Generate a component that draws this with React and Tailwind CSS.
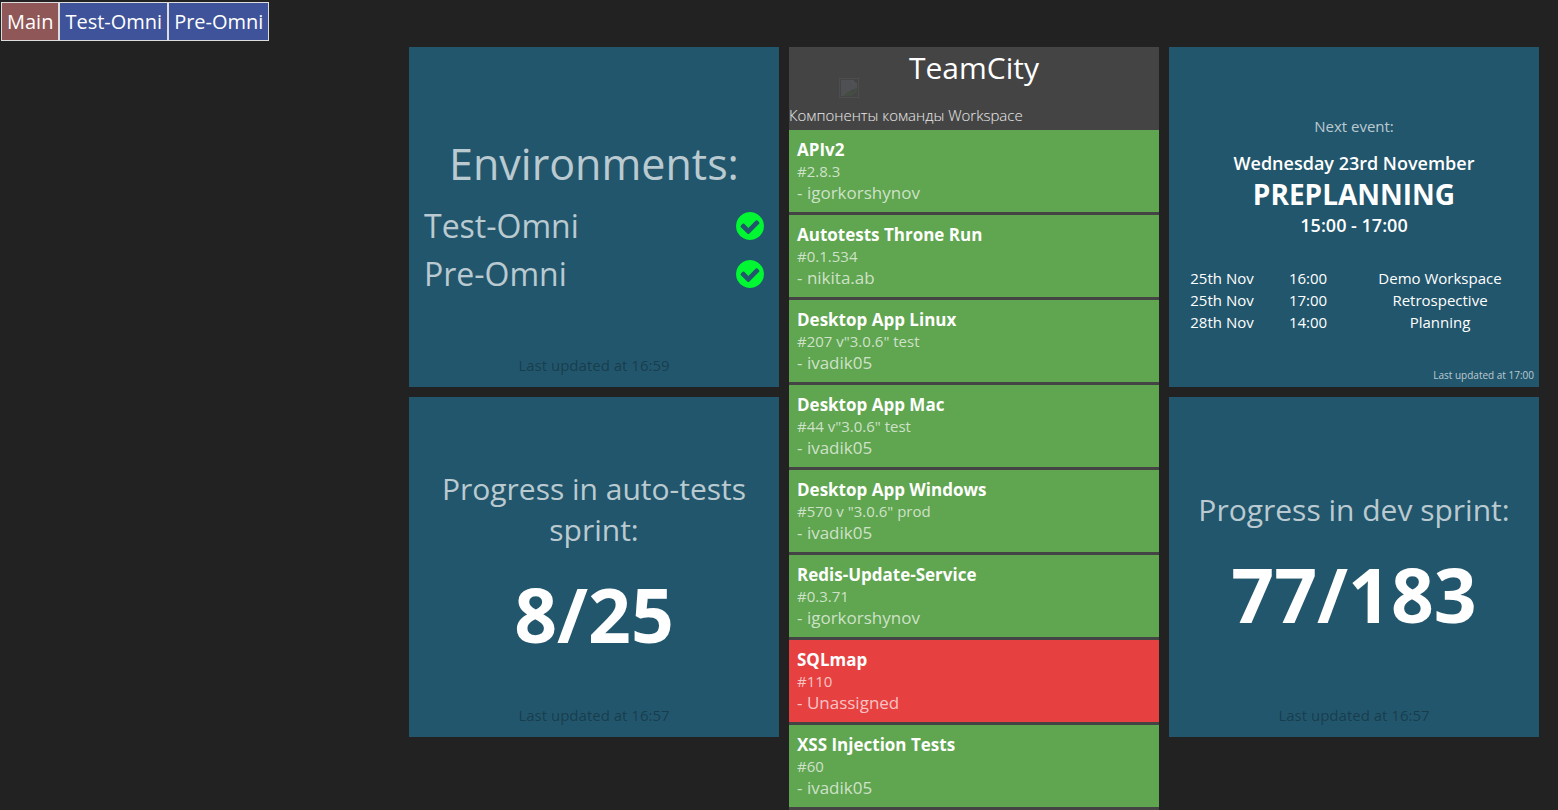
const tabs = [
  { name: "Main", color: "bg-[#8f5757]" },
  { name: "Test-Omni", color: "bg-[#3e5399]" },
  { name: "Pre-Omni", color: "bg-[#3e5399]" },
];

const environments = ["Test-Omni", "Pre-Omni"];

const builds = [
  { name: "APIv2", version: "#2.8.3", owner: "igorkorshynov" },
  { name: "Autotests Throne Run", version: "#0.1.534", owner: "nikita.ab" },
  { name: "Desktop App Linux", version: '#207 v"3.0.6" test', owner: "ivadik05" },
  { name: "Desktop App Mac", version: '#44 v"3.0.6" test', owner: "ivadik05" },
  { name: "Desktop App Windows", version: '#570 v "3.0.6" prod', owner: "ivadik05" },
  { name: "Redis-Update-Service", version: "#0.3.71", owner: "igorkorshynov" },
  { name: "SQLmap", version: "#110", owner: "Unassigned", failed: true },
  { name: "XSS Injection Tests", version: "#60", owner: "ivadik05" },
];

const events = [
  { date: "25th Nov", time: "16:00", title: "Demo Workspace" },
  { date: "25th Nov", time: "17:00", title: "Retrospective" },
  { date: "28th Nov", time: "14:00", title: "Planning" },
];

function Tile({ className = "", children }) {
  return (
    <section
      className={`relative flex h-[340px] flex-col justify-center bg-[#22566c] px-[15px] text-center ${className}`}
    >
      {children}
    </section>
  );
}

function Updated({ time }) {
  return (
    <p className="absolute inset-x-0 bottom-3 text-[15px] leading-5 text-black/30">
      Last updated at {time}
    </p>
  );
}

function Progress({ title, value, time, className }) {
  return (
    <Tile className={className}>
      <h1 className="text-[30px] leading-[41px] text-white/70">{title}</h1>
      <p className="mt-3 text-[75px] leading-[104px] font-bold">{value}</p>
      <Updated time={time} />
    </Tile>
  );
}

function CheckCircle() {
  return (
    <svg
      viewBox="128 128 1536 1536"
      className="size-7 fill-[#00f731]"
      role="img"
      aria-label="OK"
    >
      <path d="M1412 734q0-28-18-46l-91-90q-19-19-45-19t-45 19l-408 407-226-226q-19-19-45-19t-45 19l-91 90q-18 18-18 46 0 27 18 45l362 362q19 19 45 19 27 0 46-19l543-543q18-18 18-45zm252 162q0 209-103 385.5t-279.5 279.5-385.5 103-385.5-103-279.5-279.5-103-385.5 103-385.5 279.5-279.5 385.5-103 385.5 103 279.5 279.5 103 385.5z" />
    </svg>
  );
}

function MissingPicture() {
  return (
    <svg viewBox="0 0 20 20" className="ml-[50px] size-5 opacity-10" aria-hidden="true">
      <rect x="0.5" y="0.5" width="19" height="19" fill="none" stroke="#9a9a9a" />
      <path d="M2 2h12l4 4v4l-5 2-4 4-3 2H2z" fill="#a9b8d8" />
      <path d="M5 17l5-4 3 1 5-4v3l-5 5H5z" fill="#4fa03c" />
      <path d="M14 2v4h4" fill="none" stroke="#e8e8e8" />
    </svg>
  );
}

export default function App() {
  return (
    <div className="min-h-screen bg-[#222222] font-['Open_Sans',sans-serif] text-white">
      <nav className="flex pt-0.5 pl-px">
        {tabs.map((tab) => (
          <button
            key={tab.name}
            type="button"
            className={`border border-[#dddddd] px-[5px] py-1 text-[20px] leading-[29px] ${tab.color}`}
          >
            {tab.name}
          </button>
        ))}
      </nav>

      <main className="mt-1.5 grid grid-cols-[repeat(3,370px)] grid-rows-[340px_1fr] justify-end gap-2.5 pr-[19px]">
        <Tile>
          <h1 className="text-[43px] leading-[58px] text-white/70">Environments:</h1>
          <ul className="mt-[9px] mb-px text-[32px] leading-[48px] text-white/70">
            {environments.map((name) => (
              <li key={name} className="flex items-center justify-between">
                {name}
                <CheckCircle />
              </li>
            ))}
          </ul>
          <Updated time="16:59" />
        </Tile>

        <section className="col-start-2 row-span-2 row-start-1 bg-[#444444]">
          <h1 className="pt-px text-center text-[30px] leading-10">TeamCity</h1>
          <div className="-mt-2.5">
            <MissingPicture />
          </div>
          <p className="mt-[7px] mb-1 text-[15px] leading-[21px] font-light text-white/90">
            Компоненты команды Workspace
          </p>
          <ul>
            {builds.map((build) => (
              <li
                key={build.name}
                className={`border-b-3 border-[#444444] px-2 pt-2.5 pb-2 ${
                  build.failed ? "bg-[#e74040]" : "bg-[#60a54f]"
                }`}
              >
                <h2 className="text-[17px] leading-5 font-bold">{build.name}</h2>
                <p className="text-[15px] leading-[22px] text-white/70">{build.version}</p>
                <p className="text-[17px] leading-[22px] text-white/70">- {build.owner}</p>
              </li>
            ))}
          </ul>
        </section>

        <Tile className="col-start-3 row-start-1 pt-[15px]">
          <p className="text-[15px] leading-5 text-white/70">Next event:</p>
          <h2 className="mt-[15px] text-[18px] leading-6 font-semibold">Wednesday 23rd November</h2>
          <h1 className="text-[28px] leading-[38px] font-bold">PREPLANNING</h1>
          <p className="text-[18px] leading-6 font-semibold">15:00 - 17:00</p>
          <table className="mt-[30px] w-full table-fixed text-[15px] leading-[22px]">
            <colgroup>
              <col className="w-[76px]" />
              <col className="w-24" />
              <col />
            </colgroup>
            <tbody>
              {events.map((event) => (
                <tr key={event.title}>
                  <td className="p-0">{event.date}</td>
                  <td className="p-0">{event.time}</td>
                  <td className="p-0">{event.title}</td>
                </tr>
              ))}
            </tbody>
          </table>
          <p className="absolute right-[5px] bottom-1 text-[10px] leading-4 text-white/70">
            Last updated at 17:00
          </p>
        </Tile>

        <Progress
          className="col-start-1 row-start-2"
          title="Progress in auto-tests sprint:"
          value="8/25"
          time="16:57"
        />
        <Progress
          className="col-start-3 row-start-2"
          title="Progress in dev sprint:"
          value="77/183"
          time="16:57"
        />
      </main>
    </div>
  );
}
